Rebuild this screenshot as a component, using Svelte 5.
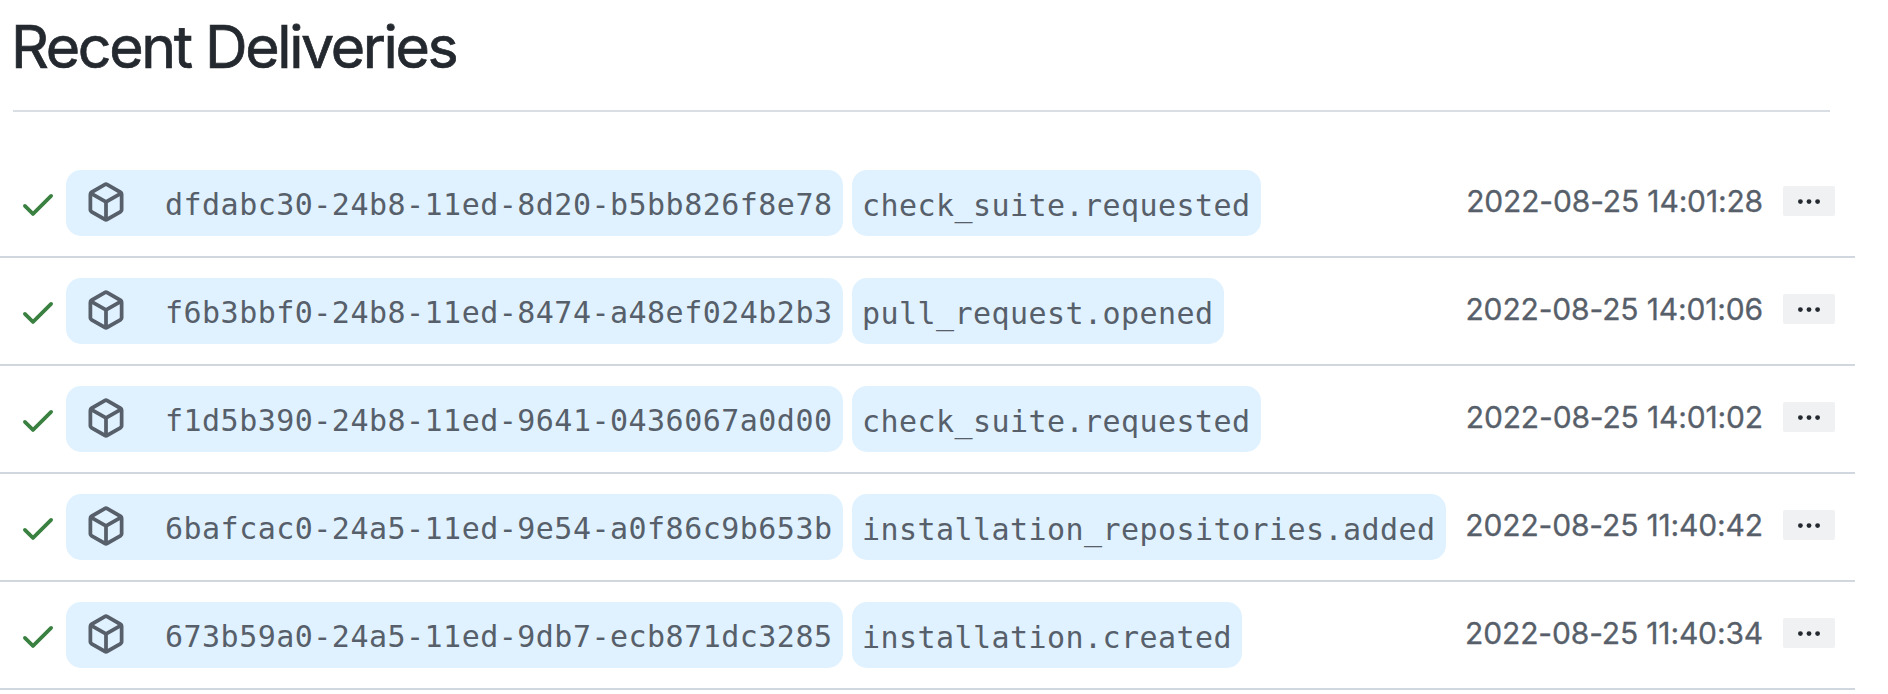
<script>
  const deliveries = [
    { id: 'dfdabc30-24b8-11ed-8d20-b5bb826f8e78', event: 'check_suite.requested', time: '2022-08-25 14:01:28' },
    { id: 'f6b3bbf0-24b8-11ed-8474-a48ef024b2b3', event: 'pull_request.opened', time: '2022-08-25 14:01:06' },
    { id: 'f1d5b390-24b8-11ed-9641-0436067a0d00', event: 'check_suite.requested', time: '2022-08-25 14:01:02' },
    { id: '6bafcac0-24a5-11ed-9e54-a0f86c9b653b', event: 'installation_repositories.added', time: '2022-08-25 11:40:42' },
    { id: '673b59a0-24a5-11ed-9db7-ecb871dc3285', event: 'installation.created', time: '2022-08-25 11:40:34' }
  ];
</script>

<main>
  <header><h2>Recent Deliveries</h2></header>
  <ul>
    {#each deliveries as d (d.id)}
      <li>
        <svg class="check" viewBox="0 0 16 16" width="40" height="40" aria-hidden="true">
          <path d="M13.78 4.22a.75.75 0 010 1.06l-7.25 7.25a.75.75 0 01-1.06 0L2.22 9.28a.75.75 0 011.06-1.06L6 10.94l6.72-6.72a.75.75 0 011.06 0z" />
        </svg>
        <code class="guid">
          <svg class="package" viewBox="0 0 16 16" width="40" height="40" aria-hidden="true">
            <path fill-rule="evenodd" d="M8.878.392a1.75 1.75 0 00-1.756 0l-5.25 3.045A1.75 1.75 0 001 4.951v6.098c0 .624.332 1.2.872 1.514l5.25 3.045a1.75 1.75 0 001.756 0l5.25-3.045c.54-.313.872-.89.872-1.514V4.951c0-.624-.332-1.2-.872-1.514L8.878.392zM7.875 1.69a.25.25 0 01.25 0l4.63 2.685L8 7.133 3.245 4.375l4.63-2.685zM2.5 5.677v5.372c0 .09.047.171.125.216l4.625 2.683V8.432L2.5 5.677zm6.25 8.271l4.625-2.683a.25.25 0 00.125-.216V5.677L8.75 8.432v5.516z" />
          </svg>
          <span>{d.id}</span>
        </code>
        <code class="event"><span>{d.event}</span></code>
        <time>{d.time}</time>
        <button type="button" aria-label="Toggle delivery details">
          <svg viewBox="0 0 24 6" width="24" height="6" aria-hidden="true">
            <circle cx="3.4" cy="3.6" r="2.4" /><circle cx="12" cy="3.6" r="2.4" /><circle cx="20.6" cy="3.6" r="2.4" />
          </svg>
        </button>
      </li>
    {/each}
  </ul>
</main>

<style>
  :global(body) { background: #fff; }
  main {
    height: 694px;
    overflow: hidden;
    font-family: Inter, "Liberation Sans", sans-serif;
    color: #57606a;
  }
  header {
    box-sizing: border-box;
    width: 1817px;
    height: 112px;
    margin-left: 13px;
    padding-top: 10px;
    border-bottom: 2px solid #d8dee4;
  }
  h2 {
    margin: 0 0 0 -2px;
    font-size: 59px;
    line-height: 74px;
    font-weight: 400;
    letter-spacing: -2.35px;
    -webkit-text-stroke: 0.7px #24292f;
    color: #24292f;
    white-space: nowrap;
  }
  ul { list-style: none; margin: 38px 0 0; padding: 0; width: 1855px; }
  li {
    box-sizing: border-box;
    display: flex;
    align-items: center;
    height: 108px;
    padding: 0 20px 0 18px;
    border-bottom: 2px solid #d0d7de;
  }
  svg { display: block; flex: none; overflow: visible; }
  .check { fill: #3a8040; margin: 2px 8px 0 0; }
  code {
    box-sizing: border-box;
    display: flex;
    align-items: center;
    height: 66px;
    border-radius: 15px;
    background: #e0f2ff;
    font-family: "DejaVu Sans Mono", monospace;
    font-size: 30px;
    line-height: 40px;
    letter-spacing: 0.48px;
    white-space: nowrap;
  }
  .guid { width: 777px; padding-left: 20px; gap: 39px; }
  .guid span { padding-top: 4px; }
  .package { fill: #57606a; margin-top: -3px; }
  .event { margin-left: 9px; padding: 6px 10px 0; letter-spacing: 0.44px; }
  time {
    margin-left: auto;
    font-size: 30px;
    line-height: 36px;
    letter-spacing: -0.15px;
    -webkit-text-stroke: 0.3px #57606a;
    white-space: nowrap;
    margin-top: -4px;
  }
  button {
    display: flex;
    align-items: center;
    justify-content: center;
    width: 52px;
    height: 30px;
    margin: -4px 0 0 20px;
    padding: 0;
    border: 0;
    border-radius: 2px;
    background: #eff1f3;
  }
  button svg { fill: #24292f; }
</style>
